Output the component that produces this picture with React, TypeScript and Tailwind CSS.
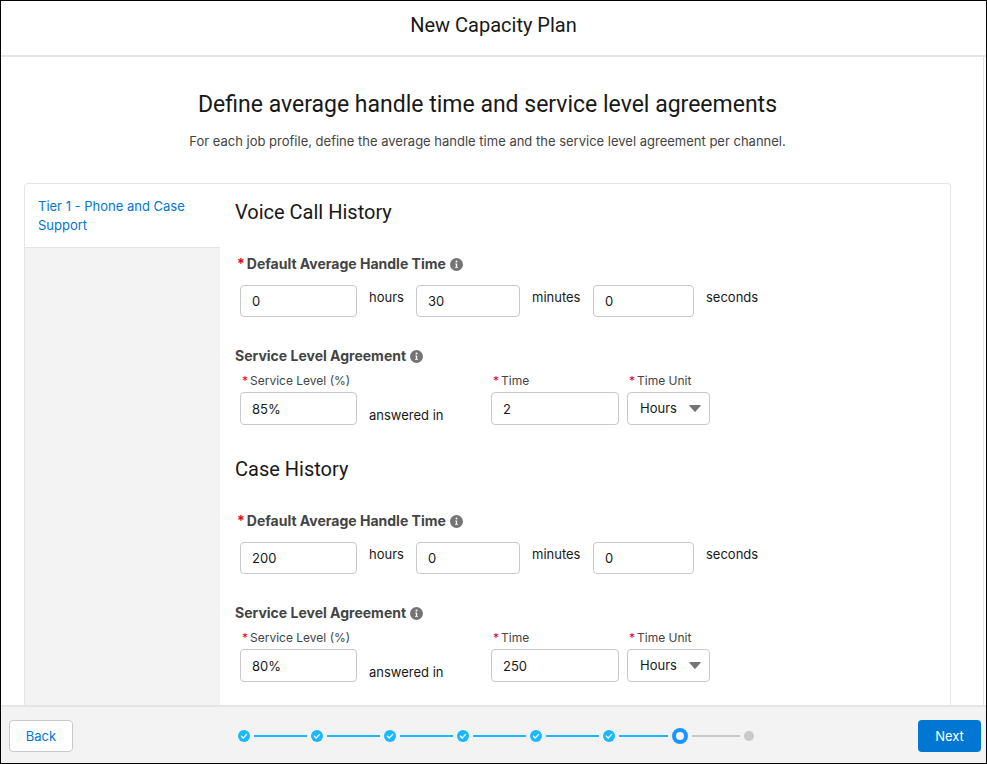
import { useId } from 'react'
import clsx from 'clsx'

interface JobChannel {
  title: string
  hours: string
  minutes: string
  seconds: string
  serviceLevel: string
  time: string
}

type StepState = 'done' | 'current' | 'upcoming'

const CHANNELS: JobChannel[] = [
  { title: 'Voice Call History', hours: '0', minutes: '30', seconds: '0', serviceLevel: '85%', time: '2' },
  { title: 'Case History', hours: '200', minutes: '0', seconds: '0', serviceLevel: '80%', time: '250' },
]

const STEPS: StepState[] = ['done', 'done', 'done', 'done', 'done', 'done', 'current', 'upcoming']

const FIELD = 'w-full rounded border border-[#c9c9c9] bg-white text-[13px] text-[#181818] focus:border-[#1b96ff] focus:outline-none'

function InfoIcon() {
  return (
    <svg viewBox="0 0 13 13" className="size-[13px]" role="img" aria-label="Help">
      <circle cx="6.5" cy="6.5" r="6.5" fill="#747474" />
      <circle cx="6.5" cy="3.6" r="1" fill="#fff" />
      <path d="M5.2 5.4h2v3.5h.8v.9H5v-.9h.8V6.3h-.6z" fill="#fff" />
    </svg>
  )
}

function Required() {
  return <span className="mr-0.5 text-[#ea001e]">*</span>
}

function DurationField({ label, value }: { label: string; value: string }) {
  const id = useId()
  return (
    <>
      <input id={id} type="text" inputMode="numeric" defaultValue={value} className={clsx(FIELD, 'h-8 px-[11px]')} />
      <label htmlFor={id} className="px-3 pt-0.5 text-[13px] leading-5 text-[#181818]">
        {label}
      </label>
    </>
  )
}

function FieldLabel({ htmlFor, children }: { htmlFor: string; children: string }) {
  return (
    <label htmlFor={htmlFor} className="mb-[3px] block pl-0.5 text-xs leading-4 whitespace-nowrap text-[#444]">
      <Required />
      {children}
    </label>
  )
}

function ChannelSection({ channel }: { channel: JobChannel }) {
  const id = useId()
  return (
    <section className="mb-[30px]">
      <h3 className="font-['Roboto',sans-serif] text-xl leading-7 text-[#181818]">{channel.title}</h3>

      <fieldset className="mt-7">
        <legend className="flex items-center pl-0.5 text-sm leading-5 font-bold text-[#444]">
          <Required />
          <span className="mr-1">Default Average Handle Time</span>
          <InfoIcon />
        </legend>
        <div className="mt-[11px] grid grid-cols-[117px_59px_104px_73px_101px_auto] pl-[5px]">
          <DurationField label="hours" value={channel.hours} />
          <DurationField label="minutes" value={channel.minutes} />
          <DurationField label="seconds" value={channel.seconds} />
        </div>
      </fieldset>

      <fieldset className="mt-[29px]">
        <legend className="flex items-center text-sm leading-5 font-bold text-[#444]">
          <span className="mr-1">Service Level Agreement</span>
          <InfoIcon />
        </legend>
        <div className="mt-[7px] grid grid-cols-[117px_134px_128px_8px_83px] items-end pl-[5px]">
          <div>
            <FieldLabel htmlFor={`${id}-level`}>Service Level (%)</FieldLabel>
            <input id={`${id}-level`} type="text" defaultValue={channel.serviceLevel} className={clsx(FIELD, 'block h-[33px] px-[11px]')} />
          </div>
          <span className="px-3 text-[13px] leading-5 text-[#181818]">answered in</span>
          <div>
            <FieldLabel htmlFor={`${id}-time`}>Time</FieldLabel>
            <input id={`${id}-time`} type="text" defaultValue={channel.time} className={clsx(FIELD, 'block h-[33px] px-[11px]')} />
          </div>
          <div className="col-start-5">
            <FieldLabel htmlFor={`${id}-unit`}>Time Unit</FieldLabel>
            <div className="relative">
              <select id={`${id}-unit`} defaultValue="Hours" className={clsx(FIELD, 'block h-[33px] appearance-none px-3')}>
                <option>Seconds</option>
                <option>Minutes</option>
                <option>Hours</option>
              </select>
              <svg viewBox="0 0 12 7" className="pointer-events-none absolute top-[13px] right-[9px] h-[7px] w-3" aria-hidden="true">
                <path d="M1 0h10c.7 0 1 .6.5 1L6.6 6.6c-.3.4-.9.4-1.2 0L.5 1C0 .6.3 0 1 0z" fill="#747474" />
              </svg>
            </div>
          </div>
        </div>
      </fieldset>
    </section>
  )
}

function StepMarker({ state }: { state: StepState }) {
  if (state === 'current') {
    return <span className="size-4 shrink-0 rounded-full border-4 border-[#1b96ff]" />
  }
  if (state === 'upcoming') {
    return <span className="size-[10px] shrink-0 rounded-full bg-[#c9c9c9]" />
  }
  return (
    <svg viewBox="0 0 12 12" className="size-3 shrink-0" aria-hidden="true">
      <circle cx="6" cy="6" r="6" fill="#1ab9ff" />
      <path d="M3.4 6.2l1.8 1.8 3.4-3.6" fill="none" stroke="#fff" strokeWidth="1.3" strokeLinecap="round" />
    </svg>
  )
}

function Progress() {
  return (
    <ol className="flex items-center" aria-label="Progress">
      {STEPS.map((state, i) => (
        <li key={i} className={clsx('flex items-center', i > 0 && (state === 'upcoming' ? 'w-[66px]' : 'w-[73px]'))}>
          {i > 0 && (
            <span className={clsx('mx-1 h-0.5 flex-1', state === 'upcoming' ? 'bg-[#c9c9c9]' : 'bg-[#1ab9ff]')} />
          )}
          <StepMarker state={state} />
        </li>
      ))}
    </ol>
  )
}

export default function App() {
  return (
    <div className="flex h-screen flex-col border border-black bg-white font-['Inter',sans-serif]">
      <header className="border-b-2 border-[#e5e5e5] pt-2.5 pb-4 text-center">
        <h1 className="font-['Roboto',sans-serif] text-xl leading-7 text-[#181818]">New Capacity Plan</h1>
      </header>

      <main className="mr-0.5 flex min-h-0 flex-1 flex-col overflow-hidden border-r border-[#e5e5e5] pr-8 pl-[23px]">
        <div className="pt-8 pb-8 text-center">
          <h2 className="font-['Roboto',sans-serif] text-[23px] leading-8 text-[#181818]">
            Define average handle time and service level agreements
          </h2>
          <p className="mt-2.5 text-[13px] leading-5 text-[#444]">
            For each job profile, define the average handle time and the service level agreement per channel.
          </p>
        </div>

        <div className="flex flex-1 rounded-t border border-b-0 border-[#e5e5e5]">
          <nav className="w-[195px] shrink-0 bg-[#f3f3f3]" aria-label="Job profiles">
            <a
              href="#tier-1"
              className="block rounded-tl border-b border-[#e5e5e5] bg-white px-[13px] pt-[13px] pb-3 text-[13px] leading-[19px] text-[#0176d3]"
            >
              Tier 1 - Phone and Case Support
            </a>
          </nav>
          <div className="flex-1 px-[15px] pt-3.5">
            {CHANNELS.map((channel) => (
              <ChannelSection key={channel.title} channel={channel} />
            ))}
          </div>
        </div>
      </main>

      <footer className="flex items-center justify-between border-t-2 border-[#e5e5e5] bg-[#f3f3f3] pt-[13px] pr-[5px] pb-[11px] pl-2">
        <button type="button" className="h-8 w-16 rounded border border-[#c9c9c9] bg-white pt-0.5 text-[13px] text-[#0176d3]">
          Back
        </button>
        <Progress />
        <button type="button" className="h-8 w-[63px] rounded bg-[#0176d3] pt-0.5 text-[13px] text-white">
          Next
        </button>
      </footer>
    </div>
  )
}
